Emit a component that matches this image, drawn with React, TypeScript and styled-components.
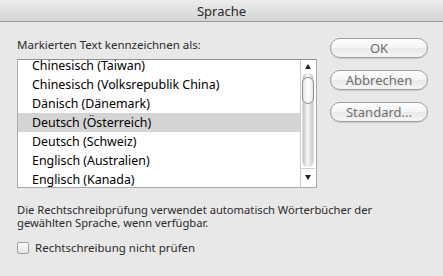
import styled, { createGlobalStyle } from "styled-components";

const GlobalStyle = createGlobalStyle`
  html, body {
    margin: 0;
    padding: 0;
    background: #e8e8e8;
  }
  body {
    font-family: "Noto Sans", "DejaVu Sans", sans-serif;
    -webkit-font-smoothing: antialiased;
  }
`;

const Window = styled.div`
  width: 443px;
  height: 276px;
  background: #e8e8e8;
  overflow: hidden;
  display: flex;
  flex-direction: column;
`;

const TitleBar = styled.div`
  height: 21px;
  flex-shrink: 0;
  display: flex;
  align-items: center;
  justify-content: center;
  background: linear-gradient(#ececec, #d5d5d5);
  border-bottom: 1px solid #9a9a9a;
  font-size: 13px;
  color: #2a2a2a;
`;

const Body = styled.div`
  padding: 16px 15px 0 17px;
  display: flex;
  flex-direction: column;
`;

const TopRow = styled.div`
  display: flex;
  justify-content: space-between;
  align-items: flex-start;
`;

const LeftColumn = styled.div`
  width: 300px;
  display: flex;
  flex-direction: column;
`;

const Label = styled.div`
  font-size: 11.5px;
  line-height: 14px;
  color: #2a2a2a;
`;

const ListBox = styled.div`
  margin-top: 7px;
  height: 127px;
  display: flex;
  background: #fff;
  border: 1px solid #a9a9a9;
  border-top-color: #8f8f8f;
`;

const Rows = styled.div`
  flex: 1;
  overflow: hidden;
`;

const RowsScroll = styled.div`
  margin-top: -4px;
`;

const Row = styled.div<{ $selected?: boolean }>`
  height: 19px;
  line-height: 19px;
  padding-left: 14px;
  font-size: 12.4px;
  color: #000;
  white-space: nowrap;
  background: ${(p) => (p.$selected ? "#d4d4d4" : "transparent")};
`;

const ScrollBar = styled.div`
  width: 15px;
  flex-shrink: 0;
  border-left: 1px solid #cdcdcd;
  display: flex;
`;

const ButtonColumn = styled.div`
  width: 98px;
  display: flex;
  flex-direction: column;
  gap: 12px;
`;

const Button = styled.div`
  height: 18px;
  border: 1px solid #9d9d9d;
  border-radius: 10px;
  display: flex;
  align-items: center;
  justify-content: center;
  background: linear-gradient(#ffffff, #f4f4f4 50%, #e9e9e9 52%, #f6f6f6);
  box-shadow: 0 1px 1px rgba(0, 0, 0, 0.12);
  font-size: 13px;
  color: #6e6e6e;
`;

const Description = styled.p`
  margin: 15px 0 0;
  max-width: 380px;
  font-size: 11.2px;
  line-height: 13px;
  color: #2a2a2a;
`;

const CheckRow = styled.label`
  margin-top: 12px;
  display: flex;
  align-items: center;
  gap: 6px;
  font-size: 11.5px;
  line-height: 14px;
  color: #2a2a2a;
`;

const CheckBox = styled.span`
  width: 10px;
  height: 10px;
  border: 1px solid #a0a0a0;
  border-radius: 2px;
  background: linear-gradient(#fdfdfd, #e4e4e4);
`;

const languages = [
  "Chinesisch (Taiwan)",
  "Chinesisch (Volksrepublik China)",
  "Dänisch (Dänemark)",
  "Deutsch (Österreich)",
  "Deutsch (Schweiz)",
  "Englisch (Australien)",
  "Englisch (Kanada)",
];

const ScrollGraphic = () => (
  <svg width="14" height="127" viewBox="0 0 14 127">
    <defs>
      <linearGradient id="track" x1="0" x2="1" y1="0" y2="0">
        <stop offset="0" stopColor="#bdbdbd" />
        <stop offset="0.45" stopColor="#f7f7f7" />
        <stop offset="1" stopColor="#c6c6c6" />
      </linearGradient>
      <linearGradient id="thumb" x1="0" x2="1" y1="0" y2="0">
        <stop offset="0" stopColor="#e2e2e2" />
        <stop offset="0.5" stopColor="#ffffff" />
        <stop offset="1" stopColor="#e6e6e6" />
      </linearGradient>
    </defs>
    <polygon points="4,9 10,9 7,4" fill="#222" />
    <rect x="1.5" y="13" width="11" height="94" rx="5.5" fill="url(#track)" />
    <rect x="1.5" y="17.5" width="11" height="26" rx="5.5" fill="url(#thumb)" stroke="#8c8c8c" />
    <line x1="0" x2="14" y1="108.5" y2="108.5" stroke="#d0d0d0" />
    <polygon points="4,115 10,115 7,120" fill="#222" />
  </svg>
);

export default function App() {
  return (
    <>
      <GlobalStyle />
      <Window>
        <TitleBar>Sprache</TitleBar>
        <Body>
          <TopRow>
            <LeftColumn>
              <Label>Markierten Text kennzeichnen als:</Label>
              <ListBox>
                <Rows>
                  <RowsScroll>
                    {languages.map((name) => (
                      <Row key={name} $selected={name === "Deutsch (Österreich)"}>
                        {name}
                      </Row>
                    ))}
                  </RowsScroll>
                </Rows>
                <ScrollBar>
                  <ScrollGraphic />
                </ScrollBar>
              </ListBox>
            </LeftColumn>
            <ButtonColumn>
              <Button>OK</Button>
              <Button>Abbrechen</Button>
              <Button>Standard...</Button>
            </ButtonColumn>
          </TopRow>
          <Description>
            Die Rechtschreibprüfung verwendet automatisch Wörterbücher der gewählten Sprache, wenn verfügbar.
          </Description>
          <CheckRow>
            <CheckBox />
            Rechtschreibung nicht prüfen
          </CheckRow>
        </Body>
      </Window>
    </>
  );
}
